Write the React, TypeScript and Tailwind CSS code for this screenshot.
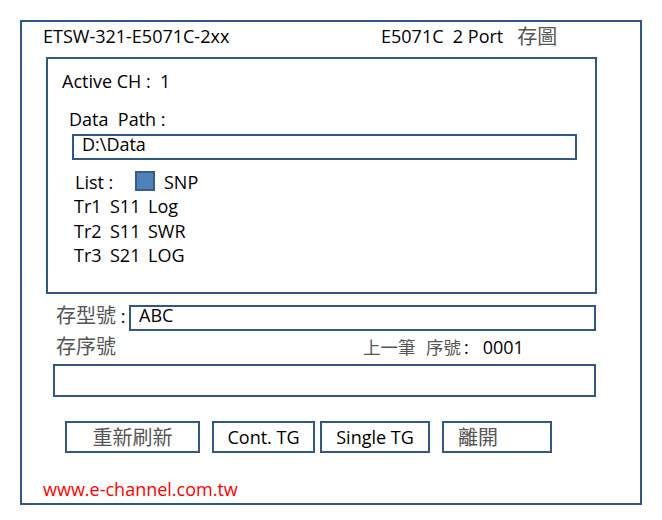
import React from "react";

const rows = [
  ["Tr1", "S11", "Log"],
  ["Tr2", "S11", "SWR"],
  ["Tr3", "S21", "LOG"],
];

const box = "border-2 border-[#2f5888] box-border";
const cjk = "font-['Noto_Sans_CJK_TC',sans-serif] text-[#555]";

export default function App() {
  return (
    <div className="min-h-[520px] w-[662px] bg-white pt-[20px] pl-[20px] font-['Open_Sans','Noto_Sans_CJK_TC',sans-serif] text-[18px] text-black">
      <div className={`${box} w-[622px] h-[485px]`}>
        {/* title */}
        <div className="mt-[2px] flex leading-[24px] whitespace-pre">
          <span className="ml-[21px] w-[338px]">ETSW-321-E5071C-2xx</span>
          <span>E5071C  2 Port</span>
          <span className={`${cjk} ml-[14px] text-[20px]`}>存圖</span>
        </div>

        {/* settings panel */}
        <div className={`${box} ml-[24px] mt-[9px] w-[551px] h-[237px]`}>
          <div className="ml-[14px] mt-[10px] leading-[24px] whitespace-pre">Active CH :  1</div>
          <div className="ml-[21px] mt-[14px] leading-[24px] whitespace-pre">Data  Path :</div>
          <div className={`${box} ml-[24px] mt-[3px] w-[505px] h-[26px] pl-[8px] leading-[16px]`}>D:\Data</div>

          <div className="ml-[27px] mt-[10px] flex items-start leading-[24px]">
            <span className="w-[60px]">List :</span>
            <span className="mt-[1px] h-[20px] w-[20px] border-2 border-[#385d8a] bg-[#4f81bd]" />
            <span className="ml-[9px]">SNP</span>
          </div>
          <div className="ml-[26px] leading-[24.5px]">
            {rows.map((r) => (
              <div key={r[0]} className="grid grid-cols-[36px_38px_auto]">
                <span>{r[0]}</span>
                <span>{r[1]}</span>
                <span>{r[2]}</span>
              </div>
            ))}
          </div>
        </div>

        {/* model */}
        <div className="ml-[34px] mt-[11px] flex h-[26px] items-start">
          <span className="w-[73px] leading-[20px] whitespace-pre">
            <span className={`${cjk} text-[20px]`}>存型號</span> :
          </span>
          <div className={`${box} w-[467px] h-[26px] pl-[8px] leading-[16px]`}>ABC</div>
        </div>

        {/* serial */}
        <div className="ml-[34px] mt-[3px] flex items-baseline leading-[24px]">
          <span className={`${cjk} w-[307px] text-[20px]`}>存序號</span>
          <span className={`${cjk} w-[63px] text-[17.5px]`}>上一筆</span>
          <span className={`${cjk} w-[38px] text-[17.5px]`}>序號</span>
          <span>:</span>
          <span className="ml-[14px]">0001</span>
        </div>
        <div className={`${box} ml-[31px] mt-[5px] w-[543px] h-[33px]`} />

        {/* buttons */}
        <div className="ml-[43px] mt-[24px] flex leading-[28px]">
          <button className={`${box} h-[32px] w-[135px] text-center`}>
            <span className={`${cjk} text-[20px]`}>重新刷新</span>
          </button>
          <button className={`${box} ml-[12px] h-[32px] w-[103px] text-center`}>Cont. TG</button>
          <button className={`${box} ml-[5px] h-[32px] w-[110px] text-center`}>Single TG</button>
          <button className={`${box} ml-[12px] h-[32px] w-[110px] pl-[14px] text-left`}>
            <span className={`${cjk} text-[20px]`}>離開</span>
          </button>
        </div>

        <div className="ml-[21px] mt-[24px] leading-[24px] text-[#ff0000]">www.e-channel.com.tw</div>
      </div>
    </div>
  );
}
